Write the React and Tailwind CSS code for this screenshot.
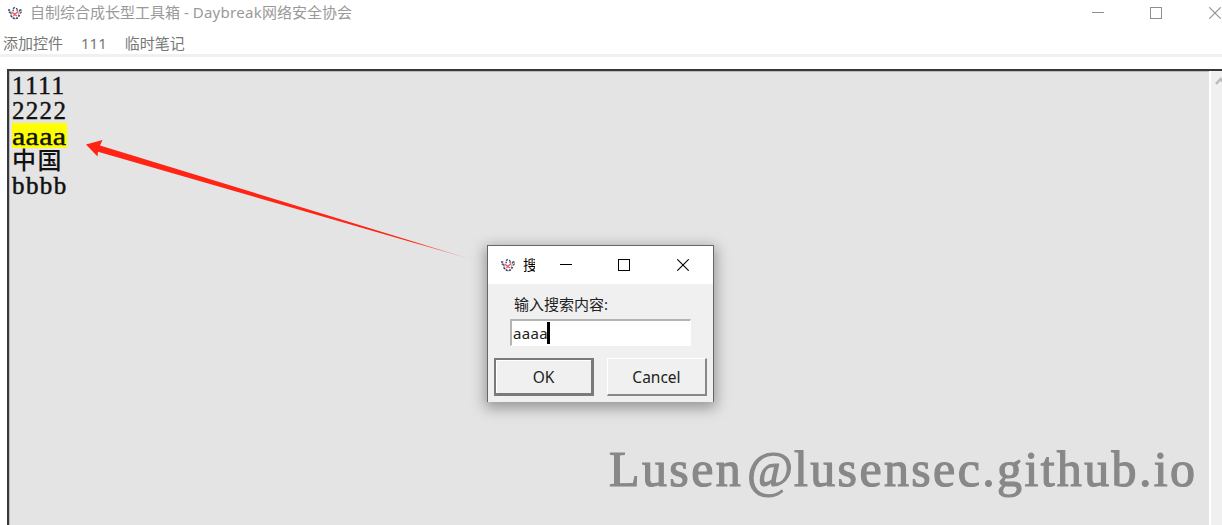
function AppIcon() {
  return (
    <svg width="16" height="16" viewBox="0 0 16 16" fill="none" className="shrink-0">
      <path d="M3 6.500 5 8M3.500 9.500 5.500 8.500M5 12.500 8 14l3-1.500M12.500 7 11 9.500" stroke="#b9b8d0" strokeWidth="1.500" />
      <path d="M1 5h2.200M1.800 6.700 4.300 8.500M6 3.800 7.800 2.200M9 3.300l1.300.700M12 6.300l1-1.300h1.500M14.500 6.500l-1.200 2" stroke="#45435f" strokeWidth="1.300" />
      <path d="m3.500 10.500 1.700 1.300M12.500 10l-1 1.700M6 13.200h1.500M9.200 13.200h1.600M5.500 5.500h1.300M9.500 5h1.300" stroke="#343252" strokeWidth="1.500" />
      <path d="m5.300 7.300 2.400 2.200L11 6.500M8.300 10l1.900 1M6.300 11 7.500 10" stroke="#f0505c" strokeWidth="1.200" />
    </svg>
  );
}

function MinimizeIcon() {
  return (
    <svg width="12" height="12" viewBox="0 0 12 12" shapeRendering="crispEdges">
      <path d="M0 5.500h12" stroke="currentColor" />
    </svg>
  );
}

function MaximizeIcon() {
  return (
    <svg width="12" height="12" viewBox="0 0 12 12" fill="none" shapeRendering="crispEdges">
      <rect x=".5" y=".5" width="11" height="11" stroke="currentColor" />
    </svg>
  );
}

function CloseIcon() {
  return (
    <svg width="12" height="12" viewBox="0 0 12 12">
      <path d="m.3.300 11.400 11.400M11.700.300.300 11.700" stroke="currentColor" strokeWidth="1.100" />
    </svg>
  );
}

function SearchDialog() {
  return (
    <div className="absolute left-[487px] top-[245px] flex h-[157px] w-[227px] flex-col border border-b-0 border-[#666] bg-[#f0f0f0] text-[#222] shadow-[0_4px_13px_2px_rgba(0,0,0,0.34)]">
      <div className="flex h-[38px] shrink-0 items-center bg-white pl-3 text-black">
        <AppIcon />
        <span className="ml-[7px] w-[12px] overflow-hidden whitespace-nowrap text-[14px] leading-5">搜</span>
        <span className="ml-[25px]"><MinimizeIcon /></span>
        <span className="ml-[46px]"><MaximizeIcon /></span>
        <span className="ml-[47px]"><CloseIcon /></span>
      </div>
      <div className="ml-[26px] mt-[10px] h-[21px] whitespace-nowrap text-[15px] leading-5">输入搜索内容:</div>
      <div className="ml-[22px] mt-[4px] flex h-[27px] w-[181px] shrink-0 items-center border-b border-l-2 border-r border-t-2 border-b-white border-l-[#b4b4b4] border-r-white border-t-[#b4b4b4] bg-white pl-px">
        <span className="-mt-px text-[15px] leading-5 tracking-[0.300px]">aaaa</span>
        <span className="-ml-px h-[22px] w-[3px] bg-black" />
      </div>
      <div className="ml-[6px] mt-[12px] flex gap-[13px] text-[15.500px] leading-5">
        <div className="flex h-[38px] w-[100px] items-center justify-center border-2 border-b-[3px] border-r-[3px] border-[#7a7a7a] bg-[#f0f0f0] shadow-[inset_1px_1px_0_white]">OK</div>
        <div className="flex h-[38px] w-[100px] items-center justify-center border-b-2 border-l border-r-2 border-t border-b-[#888] border-l-white border-r-[#888] border-t-white bg-[#f0f0f0]">Cancel</div>
      </div>
    </div>
  );
}

export default function App() {
  return (
    <div className="relative flex h-[525px] w-[1222px] flex-col overflow-hidden bg-white font-['Noto_Sans','Noto_Sans_CJK_SC',sans-serif]">
      <header className="flex h-[26px] shrink-0 items-center pl-[7px] text-[#8f8f8f]">
        <AppIcon />
        <span className="-mt-[2px] ml-[7px] whitespace-nowrap text-[15px] leading-[24px] text-[#999]">自制综合成长型工具箱 - <span className="tracking-[0.300px]">Daybreak</span>网络安全协会</span>
        <div className="ml-auto flex shrink-0 pr-px">
          <MinimizeIcon />
          <span className="ml-[46px]"><MaximizeIcon /></span>
          <span className="ml-[47px]"><CloseIcon /></span>
        </div>
      </header>
      <nav className="flex h-[31px] shrink-0 gap-[18px] border-b-[3px] border-[#f0f0f0] pl-[3px] pt-[5px] text-[15px] leading-6 text-[#777]">
        <span>添加控件</span>
        <span>111</span>
        <span>临时笔记</span>
      </nav>
      <main className="ml-[7px] mt-[12px] flex min-h-0 flex-1 border-l-2 border-t-2 border-[#383838]">
        <div className="flex w-[1200px] shrink-0 flex-col items-start bg-[#e4e4e4] pl-[3px] pt-[2px] font-['Liberation_Serif','Noto_Sans_CJK_SC',serif] text-[25px] leading-[25px] text-[#111] shadow-[inset_1px_1px_0_#bbb]">
          <span className="h-[25px] tracking-[1.600px] [-webkit-text-stroke:0.5px]">1111</span>
          <span className="h-[25px] tracking-[1.300px] [-webkit-text-stroke:0.4px]">2222</span>
          <div className="h-[25px] w-[55px] bg-[#ff0]">
            <span className="inline-block h-[25px] origin-left scale-x-[1.150] align-top text-[26px] leading-[28px] tracking-[0.300px] [-webkit-text-stroke:0.4px]">aaaa</span>
          </div>
          <span className="h-[25px] text-[24px] font-medium leading-[27px] tracking-[1.500px]">中国</span>
          <span className="h-[25px] tracking-[1.400px] [-webkit-text-stroke:0.500px]">bbbb</span>
        </div>
        <div className="flex-1 border-l-[2px] border-white bg-[#f0f0f0] pl-[4px] pt-[6px] text-[#bbb]">
          <svg width="12" height="10" viewBox="0 0 12 10" fill="none">
            <path d="m1 7 4.500-5L10 7" stroke="currentColor" strokeWidth="2.500" />
          </svg>
        </div>
      </main>
      <svg className="absolute left-[80px] top-[130px]" width="400" height="140" viewBox="80 130 400 140">
        <defs>
          <linearGradient id="tail" x1="86" x2="470" y1="0" y2="0" gradientUnits="userSpaceOnUse">
            <stop offset=".85" stopColor="#ff2414" />
            <stop offset="1" stopColor="#ff2414" stopOpacity=".3" />
          </linearGradient>
        </defs>
        <path d="M86 144.500 102.500 140l-2.500 5.500L472 259.500 98 151.800l-.5 4.700Z" fill="url(#tail)" />
      </svg>
      <SearchDialog />
      <div className="absolute left-[609px] top-[439px] flex whitespace-nowrap font-['Liberation_Serif',serif] text-[50px] leading-[60px] text-[#888] [-webkit-text-stroke:1.200px]">
        <span className="w-[138px] tracking-[2.400px]">Lusen</span>
        <span className="w-[47px]">@</span>
        <span className="tracking-[2.350px]">lusensec.github.io</span>
      </div>
    </div>
  );
}
